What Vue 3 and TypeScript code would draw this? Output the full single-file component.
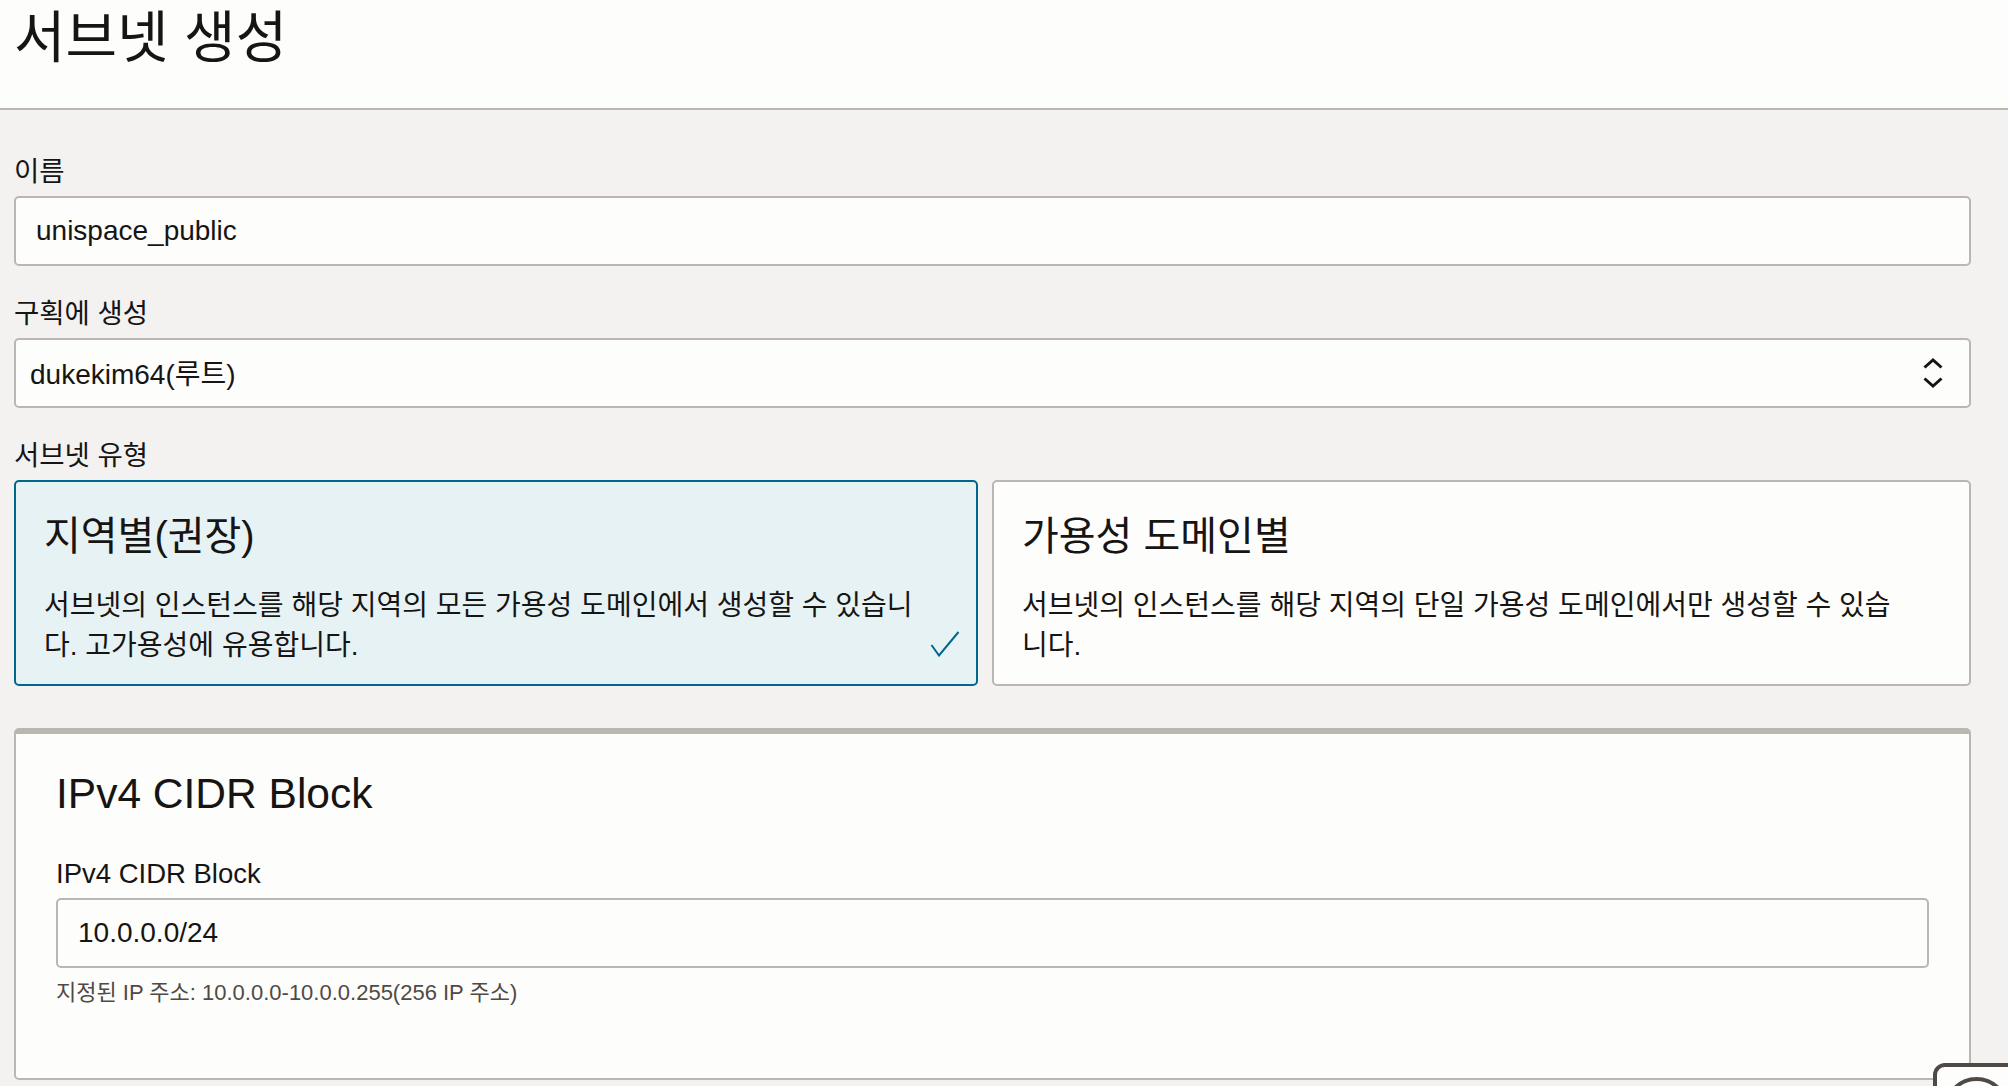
<template>
  <div class="page">
    <header class="page-header">
      <h1>서브넷 생성</h1>
    </header>

    <main class="form">
      <div class="field">
        <label>이름</label>
        <input class="text-input" type="text" value="unispace_public" readonly />
      </div>

      <div class="field">
        <label>구획에 생성</label>
        <div class="select-box">
          <span>dukekim64(루트)</span>
          <svg class="chevrons" width="20" height="30" viewBox="0 0 20 30" fill="none">
            <path d="M1.5 9.5 L10 2 L18.5 9.5" />
            <path d="M1.5 20.5 L10 28 L18.5 20.5" />
          </svg>
        </div>
      </div>

      <div class="field">
        <label>서브넷 유형</label>
        <div class="card-grid">
          <div
            v-for="card in cards"
            :key="card.title"
            class="type-card"
            :class="{ selected: card.selected }"
          >
            <h3>{{ card.title }}</h3>
            <p>{{ card.text }}</p>
            <svg v-if="card.selected" class="check" width="30" height="26" viewBox="0 0 30 26" fill="none">
              <path d="M1.5 14 L9 24.5 L28.5 1" />
            </svg>
          </div>
        </div>
      </div>

      <section class="panel">
        <h2>IPv4 CIDR Block</h2>
        <label>IPv4 CIDR Block</label>
        <input class="text-input" type="text" value="10.0.0.0/24" readonly />
        <div class="help">지정된 IP 주소: 10.0.0.0-10.0.0.255(256 IP 주소)</div>
      </section>
    </main>

    <div class="help-widget">
      <span class="widget-ring"></span>
    </div>
  </div>
</template>

<script setup lang="ts">
const cards = [
  {
    title: "지역별(권장)",
    text: "서브넷의 인스턴스를 해당 지역의 모든 가용성 도메인에서 생성할 수 있습니다. 고가용성에 유용합니다.",
    selected: true,
  },
  {
    title: "가용성 도메인별",
    text: "서브넷의 인스턴스를 해당 지역의 단일 가용성 도메인에서만 생성할 수 있습니다.",
    selected: false,
  },
];
</script>

<style scoped>
.page {
  width: 2008px;
  height: 1086px;
  overflow: hidden;
  position: relative;
  background: #f3f2f1;
  color: #161513;
  font-family: "Liberation Sans", "Noto Sans CJK KR", sans-serif;
}

.page-header {
  height: 108px;
  background: #fdfdfb;
  border-bottom: 2px solid #bcb6b1;
  padding-left: 14px;
}

.page-header h1 {
  margin: 0;
  font-size: 56px;
  font-weight: 400;
  line-height: 76px;
}

.form {
  padding: 42px 37px 0 14px;
}

.field {
  margin-bottom: 28px;
}

.field:last-of-type {
  margin-bottom: 42px;
}

label {
  display: block;
  font-size: 27.5px;
  line-height: 40px;
  margin-bottom: 4px;
}

.text-input {
  display: block;
  box-sizing: border-box;
  width: 100%;
  height: 70px;
  padding: 0 20px;
  background: #fdfdfb;
  border: 2px solid #bcb6b1;
  border-radius: 5px;
  color: #161513;
  font-family: inherit;
  font-size: 28px;
  outline: none;
}

.select-box {
  box-sizing: border-box;
  height: 70px;
  display: flex;
  align-items: center;
  justify-content: space-between;
  padding: 0 26px 2px 14px;
  background: #fdfdfb;
  border: 2px solid #bcb6b1;
  border-radius: 5px;
  font-size: 28px;
}

.chevrons {
  margin-bottom: -2px;
}

.chevrons path {
  stroke: #161513;
  stroke-width: 3;
}

.card-grid {
  display: grid;
  grid-template-columns: 964px 979px;
  column-gap: 14px;
}

.type-card {
  position: relative;
  box-sizing: border-box;
  height: 206px;
  padding: 29px 58px 0 28px;
  background: #fdfdfb;
  border: 2px solid #bcb6b1;
  border-radius: 5px;
}

.type-card.selected {
  background: #e7f2f5;
  border-color: #00688c;
}

.type-card h3 {
  margin: 0 0 25px;
  font-size: 40px;
  font-weight: 400;
  line-height: 50px;
}

.type-card p {
  margin: 0;
  font-size: 28px;
  line-height: 40px;
}

.check {
  position: absolute;
  right: 16px;
  bottom: 27px;
}

.check path {
  stroke: #00688c;
  stroke-width: 2;
}

.panel {
  box-sizing: border-box;
  height: 352px;
  padding: 35px 40px 0 40px;
  background: #fdfdfb;
  border: 2px solid #bcb6b1;
  border-top-width: 6px;
  border-radius: 5px;
}

.panel h2 {
  margin: 0 0 36px;
  font-size: 42.5px;
  font-weight: 400;
  line-height: 50px;
}

.panel label {
  font-size: 27.5px;
  line-height: 38px;
  margin-bottom: 5px;
}

.help {
  margin-top: 10px;
  font-size: 22px;
  line-height: 30px;
  color: #4f4a45;
}

.help-widget {
  position: absolute;
  left: 1933px;
  top: 1063px;
  box-sizing: border-box;
  width: 100px;
  height: 60px;
  background: #fdfdfb;
  border: 4px solid #4f4a45;
  border-radius: 12px;
}

.widget-ring {
  position: absolute;
  left: 7px;
  top: 10px;
  box-sizing: border-box;
  width: 65px;
  height: 65px;
  border: 4px solid #4f4a45;
  border-radius: 50%;
}
</style>

<style>
html,
body {
  margin: 0;
  overflow: hidden;
}
</style>
